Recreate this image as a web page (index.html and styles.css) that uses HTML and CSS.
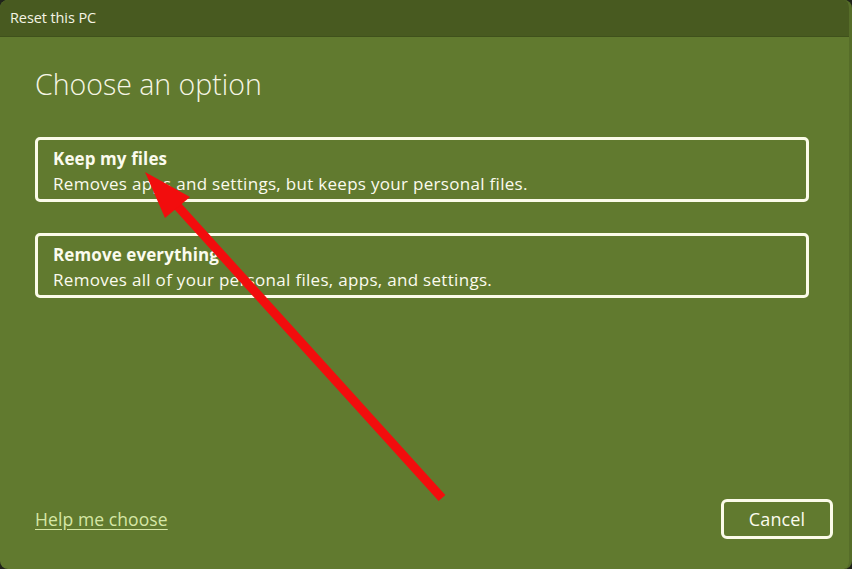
FILE: index.html
```html
<!DOCTYPE html>
<html lang="en">
<head>
<meta charset="utf-8">
<title>Reset this PC</title>
<link rel="stylesheet" href="styles.css">
</head>
<body>
<div class="window">
  <header class="titlebar">Reset this PC</header>
  <main class="content">
    <h1 class="heading">Choose an option</h1>
    <div class="options">
      <div class="option">
        <div class="option-title">Keep my files</div>
        <div class="option-desc">Removes apps and settings, but keeps your personal files.</div>
      </div>
      <div class="option">
        <div class="option-title">Remove everything</div>
        <div class="option-desc">Removes all of your personal files, apps, and settings.</div>
      </div>
    </div>
    <footer class="footer">
      <a class="help" href="#">Help me choose</a>
      <button class="cancel">Cancel</button>
    </footer>
  </main>
  <svg class="arrow" width="852" height="569" viewBox="0 0 852 569">
    <line x1="442" y1="498" x2="172" y2="200" stroke="#f20d0d" stroke-width="9" stroke-linecap="butt"/>
    <polygon points="145,172 190,197 165,218" fill="#f20d0d"/>
  </svg>
</div>
</body>
</html>
```
FILE: styles.css
```css
html, body {
  margin: 0;
  padding: 0;
  background: #20241a;
}
body {
  width: 852px;
  height: 569px;
  overflow: hidden;
  font-family: "Open Sans", "Noto Sans", sans-serif;
}
.window {
  position: relative;
  width: 852px;
  height: 569px;
  background: #617a2f;
  border-radius: 8px;
  overflow: hidden;
  display: flex;
  flex-direction: column;
  box-sizing: border-box;
  border-right: 3px solid #566d29;
}
.titlebar {
  height: 37px;
  box-sizing: border-box;
  background: #485a20;
  border-bottom: 1px solid #3f511b;
  color: #f4f4e4;
  font-size: 14.5px;
  padding: 8px 0 0 10px;
  letter-spacing: -0.1px;
}
.content {
  flex: 1;
  display: flex;
  flex-direction: column;
  padding: 0 40px 30px 35px;
}
.heading {
  margin: 28px 0 0 0;
  font-weight: 300;
  font-size: 28.5px;
  line-height: 38px;
  color: #f6f6e6;
  letter-spacing: 0;
}
.options {
  margin-top: 34px;
  display: flex;
  flex-direction: column;
  gap: 31px;
}
.option {
  height: 65px;
  box-sizing: border-box;
  border: 3px solid #fbfbe9;
  border-radius: 5px;
  padding: 7px 15px 0 15px;
  color: #fbfbee;
}
.option-title {
  font-weight: 700;
  font-size: 17px;
  line-height: 24px;
  letter-spacing: 0.1px;
}
.option-desc {
  margin-top: 1px;
  font-size: 17px;
  line-height: 24px;
  letter-spacing: 0.3px;
}
.footer {
  margin-top: auto;
  margin-right: -24px;
  display: flex;
  align-items: center;
  justify-content: space-between;
}
.help {
  color: #d6e7a6;
  font-size: 17.5px;
  text-decoration: underline;
  text-underline-offset: 3px;
  letter-spacing: 0.1px;
}
.cancel {
  width: 112px;
  height: 40px;
  background: transparent;
  border: 3px solid #fbfbe9;
  border-radius: 6px;
  color: #fbfbee;
  font-family: inherit;
  font-size: 18px;
  letter-spacing: 0.1px;
}
.arrow {
  position: absolute;
  left: 0;
  top: 0;
  pointer-events: none;
}
```
